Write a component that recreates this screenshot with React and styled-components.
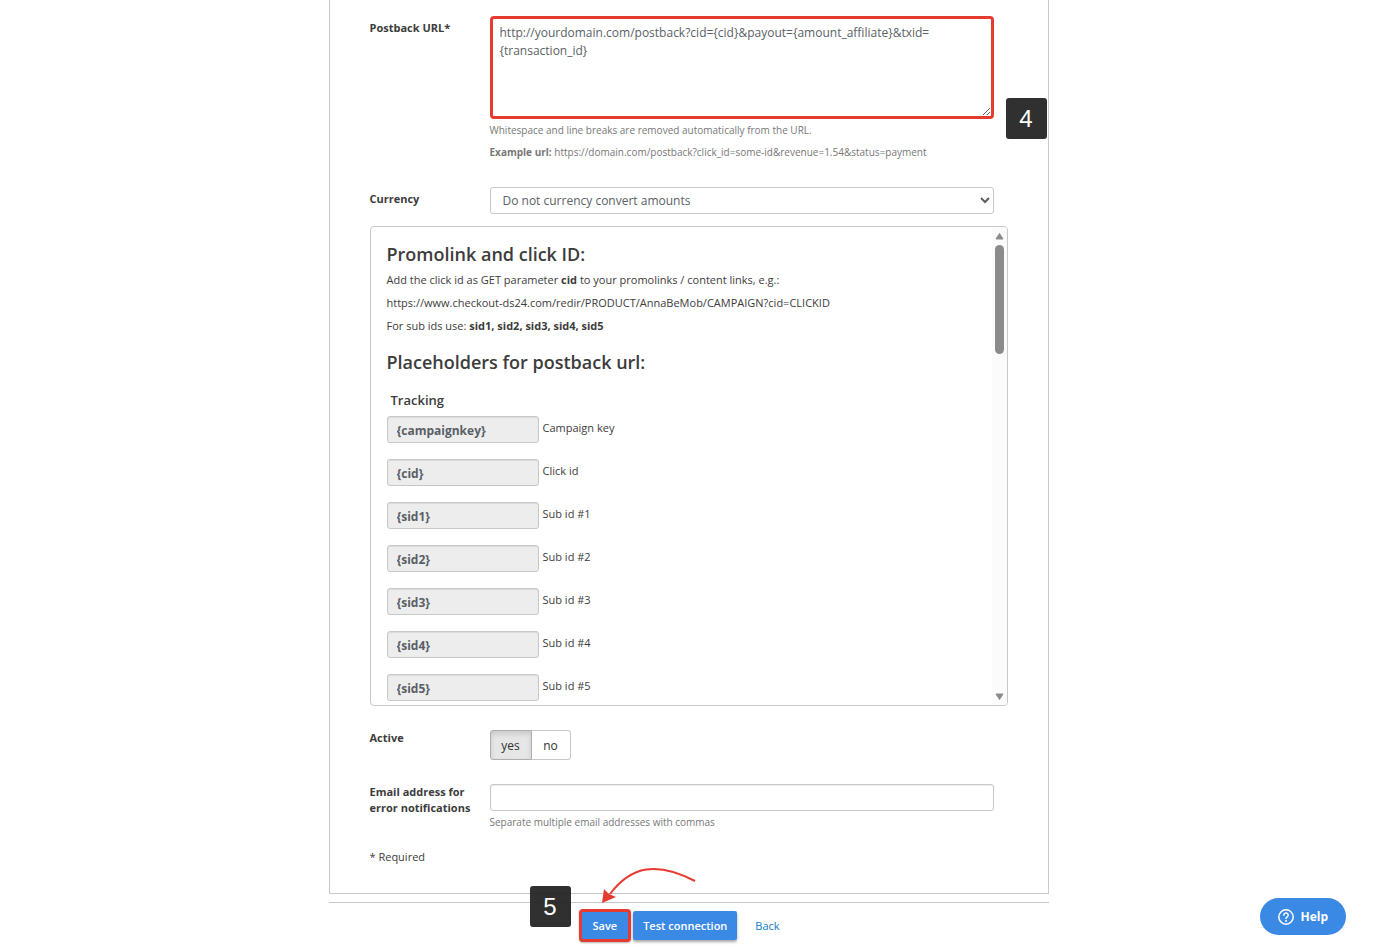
import React, { useState } from "react";
import styled, { createGlobalStyle } from "styled-components";

const GlobalStyle = createGlobalStyle`
  *, *::before, *::after { box-sizing: border-box; }
  body {
    margin: 0;
    background: #fff;
    color: #3c3c3c;
    font-family: "Open Sans", "Noto Sans", sans-serif;
    font-size: 11px;
    line-height: 16px;
  }
  button, input, select, textarea { font-family: inherit; margin: 0; }
  p, h2, h3 { margin: 0; }
`;

const Page = styled.form`
  max-width: 720px;
  margin: 0 auto;
`;

const Panel = styled.main`
  display: flex;
  flex-direction: column;
  padding: 16px 40px 28px;
  border: solid #c8c8c8;
  border-width: 0 1px 1px;
`;

const Row = styled.div`
  display: grid;
  grid-template-columns: 120px minmax(0, 1fr);
  padding-right: 14px;
  margin-bottom: ${(p) => p.$gap}px;
`;

const Label = styled.label`
  font-weight: 700;
  padding-top: ${(p) => p.$top ?? 4}px;
`;

const Field = styled.div`
  position: relative;
  display: flex;
  flex-direction: column;
`;

const UrlArea = styled.textarea`
  height: 103px;
  padding: 5px 7px;
  border: 3px solid #e63b31;
  border-radius: 4px;
  outline: none;
  background: #fff;
  color: #5a5f66;
  font-size: 12px;
  line-height: 18px;
  resize: vertical;
`;

const Hint = styled.p`
  color: #777;
  font-size: 10px;
  line-height: 14px;
  margin-top: ${(p) => p.$top || 4}px;
`;

const Control = styled.input`
  height: 27px;
  padding: 2px 9px;
  border: 1px solid #c8c8c8;
  border-radius: 3px;
  background: #fff;
  box-shadow: inset 0 1px 1px rgba(0, 0, 0, 0.08);
  color: #5a5f66;
  font-size: 12px;
`;

const Select = styled(Control).attrs({ as: "select" })`
  padding: 0 8px;
  box-shadow: none;
`;

const Badge = styled.span`
  position: absolute;
  display: grid;
  place-items: center;
  width: 41px;
  height: 41px;
  border-radius: 3px;
  background: rgba(30, 30, 30, 0.92);
  color: #fff;
  font-family: "Liberation Sans", Arial, sans-serif;
  font-size: 24px;
  line-height: 24px;
`;

const FieldBadge = styled(Badge)`
  left: calc(100% + 12px);
  bottom: -20px;
`;

const InfoBox = styled.section`
  display: flex;
  height: 480px;
  margin-bottom: 24px;
  border: 1px solid #c8c8c8;
  border-radius: 4px;
  overflow: hidden;
`;

const InfoContent = styled.div`
  flex: 1;
  padding: 15px 16px 0;
  overflow: hidden;
`;

const Heading = styled.h2`
  font-size: 18px;
  font-weight: 600;
  line-height: 24px;
  margin-top: ${(p) => p.$before || 0}px;
  margin-bottom: ${(p) => p.$after}px;
`;

const Text = styled.p`
  margin-bottom: 7px;
`;

const GroupTitle = styled.h3`
  padding-left: 4px;
  margin-bottom: 6px;
  font-size: 13px;
  font-weight: 600;
  line-height: 20px;
`;

const Placeholder = styled.label`
  display: flex;
  gap: 4px;
  height: 27px;
  margin-bottom: 16px;
  line-height: 24px;
`;

const Token = styled(Control)`
  width: 152px;
  padding-top: 4px;
  background: #ededed;
  font-weight: 700;
`;

const Rail = styled.div`
  display: flex;
  flex-direction: column;
  align-items: center;
  width: 15px;
  padding: 5px 0 4px;
  background: #fbfbfb;
`;

const Thumb = styled.div`
  width: 9px;
  height: 109px;
  margin: 5px 0 auto;
  border-radius: 5px;
  background: #8b8b8b;
`;

const Toggle = styled.div`
  display: flex;
`;

const ToggleButton = styled.button`
  width: ${(p) => (p.$last ? 39 : 42)}px;
  height: 30px;
  padding: 0;
  border: 1px solid ${(p) => (p.$on ? "#adadad" : "#c8c8c8")};
  border-left-width: ${(p) => (p.$last ? 0 : 1)}px;
  border-radius: ${(p) => (p.$last ? "0 3px 3px 0" : "3px 0 0 3px")};
  background: ${(p) => (p.$on ? "#e6e6e6" : "#fff")};
  box-shadow: ${(p) => (p.$on ? "inset 0 3px 5px rgba(0, 0, 0, 0.125)" : "none")};
  color: #333;
  font-size: 12px;
`;

const Footer = styled.footer`
  position: relative;
  display: flex;
  align-items: center;
  margin-top: 8px;
  padding: 6px 0 8px 250px;
  border-top: 1px solid #c8c8c8;
`;

const Action = styled.button`
  height: 29px;
  padding: 0 10px;
  border: 0;
  border-radius: 2px;
  background: #3a89e5;
  box-shadow: 0 2px 3px rgba(0, 0, 0, 0.35);
  color: #fff;
  font-size: 11px;
  font-weight: 600;
`;

const SaveAction = styled(Action)`
  height: 33px;
  padding: 0 11px;
  margin-right: 2px;
  border: 3px solid #e63b31;
  border-radius: 4px;
  box-shadow: 0 1px 2px rgba(0, 0, 0, 0.3);
`;

const BackLink = styled.a`
  margin-left: 18px;
  color: #0a7cc4;
  text-decoration: none;
`;

const FooterBadge = styled(Badge)`
  left: 201px;
  top: -17px;
`;

const Arrow = styled.svg`
  position: absolute;
  left: 271px;
  top: -37px;
  width: 98px;
  height: 39px;
`;

const HelpButton = styled.button`
  position: fixed;
  right: 31px;
  bottom: 16px;
  display: flex;
  align-items: center;
  gap: 5px;
  height: 37px;
  padding: 0 18px 0 17px;
  border: 0;
  border-radius: 19px;
  background: #3a89e5;
  color: #fff;
  font-size: 12px;
  font-weight: 700;
`;

const placeholders = [
  ["campaignkey", "Campaign key"],
  ["cid", "Click id"],
  ["sid1", "Sub id #1"],
  ["sid2", "Sub id #2"],
  ["sid3", "Sub id #3"],
  ["sid4", "Sub id #4"],
  ["sid5", "Sub id #5"],
];

export default function App() {
  const [active, setActive] = useState(true);
  return (
    <>
      <GlobalStyle />
      <Page onSubmit={(e) => e.preventDefault()}>
        <Panel>
          <Row $gap={28}>
            <Label htmlFor="url">Postback URL*</Label>
            <Field>
              <Field>
                <UrlArea
                  id="url"
                  spellCheck={false}
                  defaultValue="http://yourdomain.com/postback?cid={cid}&payout={amount_affiliate}&txid={transaction_id}"
                />
                <FieldBadge>4</FieldBadge>
              </Field>
              <Hint>Whitespace and line breaks are removed automatically from the URL.</Hint>
              <Hint $top={8}>
                <b>Example url:</b> https://domain.com/postback?click_id=some-id&amp;revenue=1.54&amp;status=payment
              </Hint>
            </Field>
          </Row>

          <Row $gap={12}>
            <Label htmlFor="currency">Currency</Label>
            <Field>
              <Select id="currency">
                <option>Do not currency convert amounts</option>
              </Select>
            </Field>
          </Row>

          <InfoBox>
            <InfoContent>
              <Heading $after={6}>Promolink and click ID:</Heading>
              <Text>
                Add the click id as GET parameter <b>cid</b> to your promolinks / content links, e.g.:
              </Text>
              <Text>https://www.checkout-ds24.com/redir/PRODUCT/AnnaBeMob/CAMPAIGN?cid=CLICKID</Text>
              <Text>
                For sub ids use: <b>sid1, sid2, sid3, sid4, sid5</b>
              </Text>
              <Heading $before={16} $after={16}>Placeholders for postback url:</Heading>
              <GroupTitle>Tracking</GroupTitle>
              {placeholders.map(([key, text]) => (
                <Placeholder key={key}>
                  <Token readOnly value={`{${key}}`} />
                  {text}
                </Placeholder>
              ))}
            </InfoContent>
            <Rail aria-hidden="true">
              <svg width="9" height="8" viewBox="0 0 9 8">
                <path d="M4.5 1.5 8 7H1Z" fill="#8b8b8b" stroke="#8b8b8b" strokeLinejoin="round" />
              </svg>
              <Thumb />
              <svg width="9" height="8" viewBox="0 0 9 8">
                <path d="M4.5 6.5 8 1H1Z" fill="#8b8b8b" stroke="#8b8b8b" strokeLinejoin="round" />
              </svg>
            </Rail>
          </InfoBox>

          <Row $gap={24}>
            <Label as="span" id="active-label" $top={0}>Active</Label>
            <Toggle role="group" aria-labelledby="active-label">
              <ToggleButton type="button" $on={active} aria-pressed={active} onClick={() => setActive(true)}>
                yes
              </ToggleButton>
              <ToggleButton type="button" $last $on={!active} aria-pressed={!active} onClick={() => setActive(false)}>
                no
              </ToggleButton>
            </Toggle>
          </Row>

          <Row $gap={20}>
            <Label htmlFor="email" $top={0}>
              Email address for
              <br />
              error notifications
            </Label>
            <Field>
              <Control id="email" type="text" />
              <Hint>Separate multiple email addresses with commas</Hint>
            </Field>
          </Row>
          <p>* Required</p>
        </Panel>

        <Footer>
          <SaveAction type="submit">Save</SaveAction>
          <Action type="button">Test connection</Action>
          <BackLink href="#back">Back</BackLink>
          <FooterBadge>5</FooterBadge>
          <Arrow viewBox="0 0 98 39" aria-hidden="true">
            <path d="M95 15C57-5 31 0 10 28" fill="none" stroke="#e63b31" strokeWidth="2" />
            <path d="M2 37 4 23 9 28 16 31Z" fill="#e63b31" />
          </Arrow>
        </Footer>
      </Page>
      <HelpButton type="button">
        <svg width="18" height="18" viewBox="0 0 18 18" fill="none" stroke="#fff" strokeWidth="1.5" aria-hidden="true">
          <circle cx="9" cy="9" r="7.2" />
          <path d="M6.8 7.3A2.2 2.2 0 1 1 10 9.2Q9 9.7 9 10.6" strokeLinecap="round" />
          <circle cx="9" cy="13" r="1" fill="#fff" stroke="none" />
        </svg>
        Help
      </HelpButton>
    </>
  );
}
